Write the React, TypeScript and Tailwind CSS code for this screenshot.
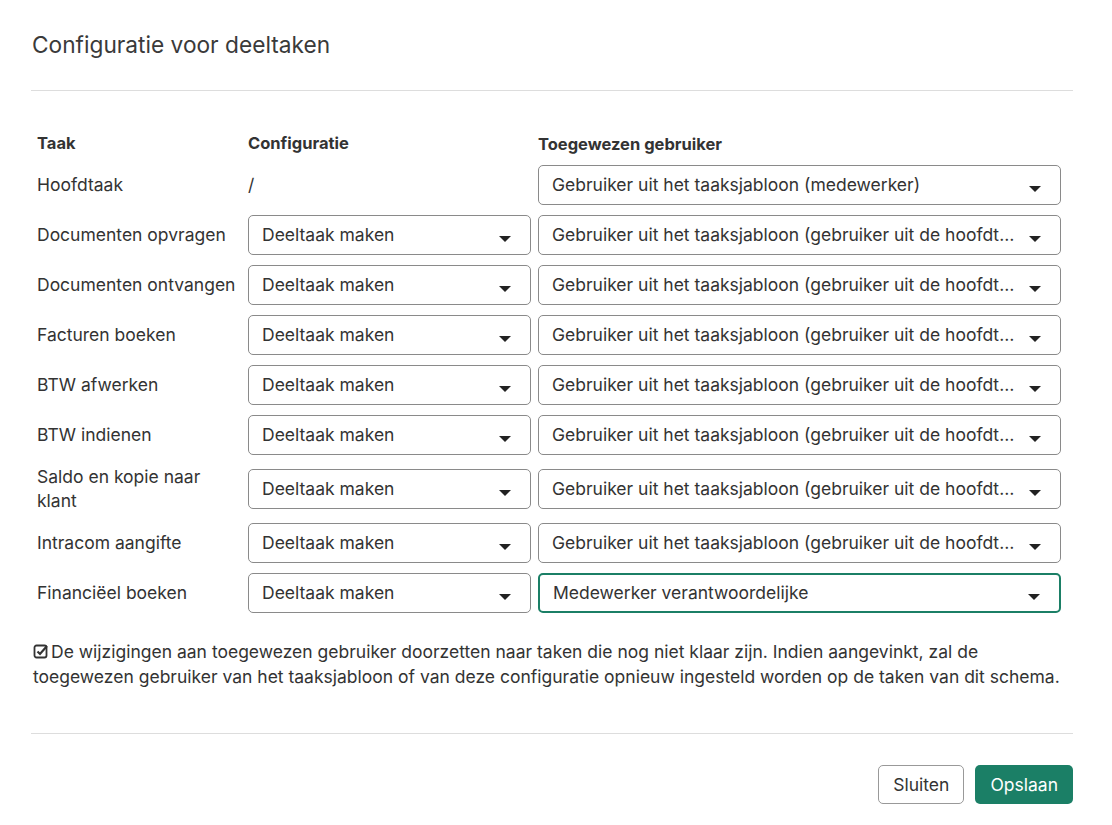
import React from "react";

const rows = [
  "Documenten opvragen",
  "Documenten ontvangen",
  "Facturen boeken",
  "BTW afwerken",
  "BTW indienen",
  "Saldo en kopie naar klant",
  "Intracom aangifte",
];
const U = "Gebruiker uit het taaksjabloon (gebruiker uit de hoofdtaak)";

function Caret() {
  return (
    <svg width="12" height="7" viewBox="0 0 12 7" className="shrink-0 mt-[8px]">
      <path d="M0 0h12L6 6z" fill="#222" />
    </svg>
  );
}

function Select({ text, focus }: { text: string; focus?: boolean }) {
  return (
    <div
      className={`h-[40px] flex items-center justify-between pl-[13px] pr-[19px] rounded-[5px] bg-white ${
        focus ? "border-2 border-[#1b7f66]" : "border border-[#8a8a8a]"
      }`}
    >
      <span className="truncate pr-3">{text}</span>
      <Caret />
    </div>
  );
}

export default function App() {
  return (
    <div
      className="w-[1112px] h-[825px] bg-white text-[#333] text-[17.5px] leading-[24px]"
      style={{ fontFamily: "Inter, 'Noto Sans', sans-serif" }}
    >
      <div className="pl-[31px] pr-[39px]">
        <h1 className="pt-[30px] pb-[30px] pl-px text-[22.7px] leading-[30px] text-[#3a3a3a]">
          Configuratie voor deeltaken
        </h1>
        <div className="border-t border-[#ddd]" />
      </div>
      <div className="pl-[37px] pt-[40px]">
        <div className="grid grid-cols-[204px_283px_523px] gap-x-[7px] gap-y-[10px] items-center">
          <div className="font-bold text-[16.5px]">Taak</div>
          <div className="font-bold text-[16.5px]">Configuratie</div>
          <div className="font-bold text-[16.5px] -mb-[2px]">Toegewezen gebruiker</div>
          <div>Hoofdtaak</div>
          <div>/</div>
          <Select text="Gebruiker uit het taaksjabloon (medewerker)" />
          {rows.map((r) => (
            <React.Fragment key={r}>
              <div>{r}</div>
              <Select text="Deeltaak maken" />
              <Select text={U} />
            </React.Fragment>
          ))}
          <div>Financiëel boeken</div>
          <Select text="Deeltaak maken" />
          <Select text="Medewerker verantwoordelijke" focus />
        </div>
      </div>
      <div className="pl-[31px] pr-[39px] pt-[26px]">
        <p className="pl-[2px] leading-[25px]">
          <svg width="16" height="16" viewBox="0 0 16 16" className="inline-block mr-[2px] -mt-[4px]">
            <rect x="1.5" y="2.5" width="12" height="12" rx="2" fill="none" stroke="#333" strokeWidth="1.8" />
            <path d="M4.5 8.5l2.5 2.5 7-8" fill="none" stroke="#333" strokeWidth="2.2" />
          </svg>
          De wijzigingen aan toegewezen gebruiker doorzetten naar taken die nog niet klaar zijn. Indien aangevinkt, zal de
          toegewezen gebruiker van het taaksjabloon of van deze configuratie opnieuw ingesteld worden op de taken van dit
          schema.
        </p>
        <div className="border-t border-[#ddd] mt-[44px]" />
        <div className="flex justify-end gap-[11px] pt-[31px]">
          <button className="h-[39px] px-[14px] border border-[#999] rounded-[5px] text-[#333]">Sluiten</button>
          <button className="h-[39px] px-[15px] rounded-[5px] bg-[#1b7f66] text-white">Opslaan</button>
        </div>
      </div>
    </div>
  );
}
